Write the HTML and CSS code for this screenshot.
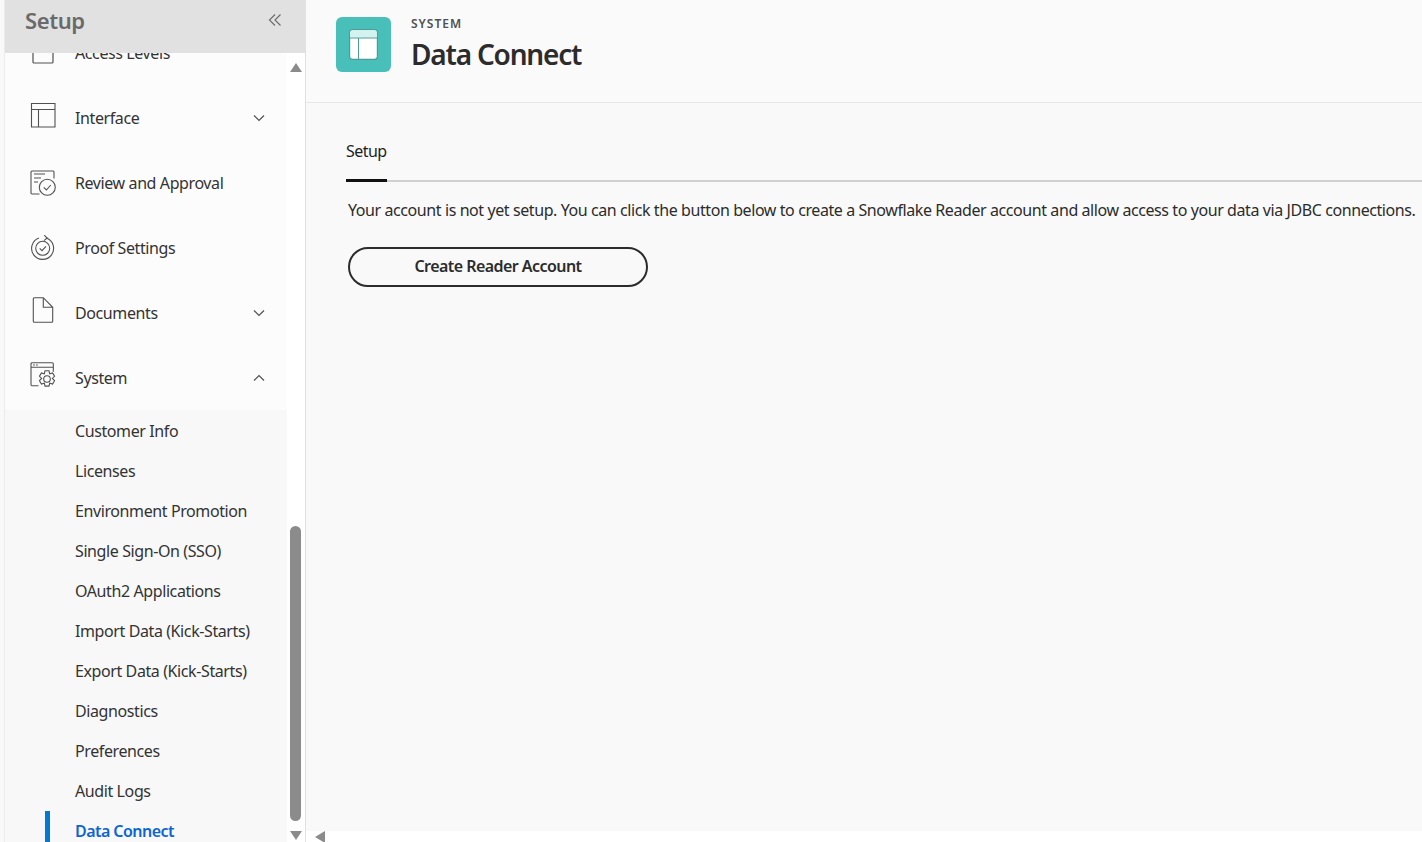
FILE: index.html
```html
<!DOCTYPE html>
<html lang="en">
<head>
<meta charset="utf-8">
<title>Data Connect</title>
<link rel="stylesheet" href="styles.css">
</head>
<body>
<div class="app">
  <aside class="sidebar">
    <div class="side-head">
      <span class="side-title">Setup</span>
      <svg class="collapse" width="14" height="14" viewBox="0 0 14 14"><path d="M7 1.500 1.500 7 7 12.500M12.500 1.500 7 7l5.500 5.500" fill="none" stroke="#6e6e6e" stroke-width="1.200"/></svg>
    </div>
    <div class="side-body">
      <nav class="nav">
        <div class="nav-list">
          <div class="row"><svg class="ico" width="26" height="26" viewBox="0 0 26 26"><rect x="3" y="3" width="20" height="20" rx="1" fill="none" stroke="#505050" stroke-width="1.200"/></svg><span>Access Levels</span></div>
          <div class="row"><svg class="ico ico-up" width="26" height="26" viewBox="0 0 26 26"><path d="M1.500 1.500h23.500v23.500H1.500zM1.500 7.500h23.500M8.500 7.500v17.500" fill="none" stroke="#505050" stroke-width="1.100"/></svg><span class="grow">Interface</span><svg class="chev" width="12" height="8" viewBox="0 0 12 8"><path d="M1 1.500 6 6.500l5-5" fill="none" stroke="#505050" stroke-width="1.200"/></svg></div>
          <div class="row"><svg class="ico" width="26" height="26" viewBox="0 0 26 26"><path d="M9.500 24H2a1 1 0 0 1-1-1V2a1 1 0 0 1 1-1h21a1 1 0 0 1 1 1v6.500M4 4h11M4 8h7M4 12h4" fill="none" stroke="#505050" stroke-width="1.100"/><circle cx="17.300" cy="17.300" r="8" fill="none" stroke="#505050" stroke-width="1.100"/><path d="m13.800 17.300 2.600 2.700 4.400-5" fill="none" stroke="#505050" stroke-width="1.100"/></svg><span>Review and Approval</span></div>
          <div class="row"><svg class="ico" width="26" height="26" viewBox="0 0 26 26"><path d="M16.500 3.100A11 11 0 1 1 9 3" fill="none" stroke="#505050" stroke-width="1.100"/><path d="m14.200 .2 2.900 2.800-3.100 2.600" fill="none" stroke="#505050" stroke-width="1.100"/><circle cx="12.700" cy="13.300" r="7" fill="none" stroke="#505050" stroke-width="1.100"/><path d="m9.700 13.300 2.300 2.300 4-4.300" fill="none" stroke="#505050" stroke-width="1.100"/></svg><span>Proof Settings</span></div>
          <div class="row"><svg class="ico ico-up" width="26" height="26" viewBox="0 0 26 26"><path d="M4.300 .7h9l9.400 9.600V24.300a1 1 0 0 1-1 1H4.300a1 1 0 0 1-1-1V1.700a1 1 0 0 1 1-1zM13.300 .7v9.600h9.400" fill="none" stroke="#505050" stroke-width="1.100"/></svg><span class="grow">Documents</span><svg class="chev" width="12" height="8" viewBox="0 0 12 8"><path d="M1 1.500 6 6.500l5-5" fill="none" stroke="#505050" stroke-width="1.200"/></svg></div>
          <div class="row"><svg class="ico ico-up" width="26" height="26" viewBox="0 0 26 26"><path d="M8.500 23.700H2a1 1 0 0 1-1-1V1.700a1 1 0 0 1 1-1h20.300a1 1 0 0 1 1 1v8M1 5.300h22.300M3 3h1.800M6 3h1.800" fill="none" stroke="#505050" stroke-width="1.100"/><path transform="translate(17 17) scale(1.300) translate(-17 -16.300)" d="m15.500 10 3 0 .6 2.300 2.200-.7 1.500 2.600-1.700 1.700 1.700 1.700-1.500 2.600-2.200-.7-.6 2.300h-3l-.6-2.300-2.200.7-1.500-2.600 1.700-1.700-1.700-1.700 1.500-2.600 2.200.7z" fill="#fcfcfd" stroke="#505050" stroke-width=".85"/><circle cx="17" cy="17" r="3.300" fill="none" stroke="#505050" stroke-width="1.100"/></svg><span class="grow">System</span><svg class="chev" width="12" height="8" viewBox="0 0 12 8"><path d="M1 6.500 6 1.500l5 5" fill="none" stroke="#505050" stroke-width="1.200"/></svg></div>
          <ul class="sub">
            <li>Customer Info</li>
            <li>Licenses</li>
            <li>Environment Promotion</li>
            <li>Single Sign-On (SSO)</li>
            <li>OAuth2 Applications</li>
            <li>Import Data (Kick-Starts)</li>
            <li>Export Data (Kick-Starts)</li>
            <li>Diagnostics</li>
            <li>Preferences</li>
            <li>Audit Logs</li>
            <li class="active">Data Connect</li>
          </ul>
        </div>
      </nav>
      <div class="vbar">
        <span class="arrow-up"></span>
        <span class="thumb-space"></span>
        <span class="thumb"></span>
        <span class="arrow-down"></span>
      </div>
    </div>
  </aside>
  <main class="main">
    <header class="page-head">
      <div class="app-icon">
        <svg width="29" height="31" viewBox="0 0 29 31"><rect x=".6" y=".6" width="27.800" height="29.800" rx="3" fill="#fff" stroke="#4d9c98" stroke-width="1.200"/><path d="M1.200 3.600a2.400 2.400 0 0 1 2.400-2.400h21.800a2.400 2.400 0 0 1 2.400 2.400V8.500H1.200z" fill="#d3f3f1"/><path d="M1 9h27M9.500 9v21" stroke="#4d9c98" stroke-width="1" fill="none"/></svg>
      </div>
      <div class="titles">
        <div class="eyebrow">SYSTEM</div>
        <h1>Data Connect</h1>
      </div>
    </header>
    <section class="content">
      <div class="tabs"><div class="tab">Setup</div></div>
      <p class="msg">Your account is not yet setup. You can click the button below to create a Snowflake Reader account and allow access to your data via JDBC connections.</p>
      <button class="btn" type="button">Create Reader Account</button>
    </section>
    <div class="hbar"><span class="arrow-left"></span></div>
  </main>
</div>
</body>
</html>
```
FILE: styles.css
```css
* { box-sizing: border-box; }
html, body { margin: 0; height: 100%; overflow: hidden; }
body { background: #f9f9f9; font-family: "Noto Sans", "Open Sans", sans-serif; color: #2c2c2c; }
.app { display: flex; height: 842px; padding-left: 4px; }
.sidebar { width: 302px; flex: none; display: flex; flex-direction: column; background: #fff; border-left: 1px solid #ececec; border-right: 1px solid #e1e1e1; }
.side-head { height: 53px; flex: none; background: #e1e1e1; display: flex; align-items: flex-start; justify-content: space-between; padding: 6px 23px 0 20px; }
.side-title { font-size: 22px; font-weight: 600; line-height: 28px; color: #6a6a6a; letter-spacing: -.4px; }
.collapse { margin-top: 7px; }
.side-body { flex: 1; display: flex; min-height: 0; }
.nav { width: 282px; flex: none; overflow: hidden; background: #fcfcfd; }
.nav-list { margin-top: -33px; }
.row { height: 65px; display: flex; align-items: center; padding: 0 22px 0 25px; font-size: 16px; letter-spacing: -.4px; color: #333; }
.ico { flex: none; margin-right: 19px; }
.ico-up { margin-bottom: 6px; }
.grow { flex: 1; }
.sub { list-style: none; margin: 0; padding: 1px 0 0; background: #f8f8f8; }
.sub li { height: 40px; line-height: 40px; padding-left: 70px; font-size: 16px; letter-spacing: -.4px; color: #333; position: relative; }
.sub .active { color: #0d66d0; font-weight: 600; letter-spacing: -.55px; }
.sub .active::before { content: ""; position: absolute; left: 40px; top: 0; width: 5px; height: 100%; background: #0078d4; }
.vbar { width: 18px; flex: none; display: flex; flex-direction: column; align-items: center; background: #fff; padding: 10px 1px 0 0; }
.arrow-up { width: 0; height: 0; border: 6.500px solid transparent; border-top: 0; border-bottom: 9px solid #8b8b8b; }
.thumb-space { height: 454px; flex: none; }
.thumb { width: 11px; height: 295px; flex: none; border-radius: 6px; background: #8b8b8b; }
.arrow-down { width: 0; height: 0; margin-top: 10px; border: 6.500px solid transparent; border-bottom: 0; border-top: 9px solid #8b8b8b; }
.main { flex: 1; min-width: 0; display: flex; flex-direction: column; }
.page-head { height: 103px; flex: none; display: flex; align-items: flex-start; padding: 17px 0 0 30px; border-bottom: 1px solid #e8e8e8; background: #fafafa; }
.app-icon { width: 55px; height: 55px; border-radius: 6px; background: #48bfb9; display: flex; align-items: center; justify-content: center; margin-right: 20px; }
.titles { margin-top: -1px; }
.eyebrow { font-size: 12px; font-weight: 600; letter-spacing: 1px; line-height: 16px; color: #505050; }
h1 { margin: 5px 0 0; font-size: 28px; font-weight: 600; line-height: 34px; letter-spacing: -1.2px; color: #2c2c2c; }
.content { flex: 1; padding: 0 0 0 40px; min-height: 0; }
.tabs { height: 79px; border-bottom: 2px solid #d0d0d0; padding-top: 38px; }
.tab { width: 41px; height: 41px; font-size: 16px; line-height: 21px; letter-spacing: -.55px; color: #1f1f1f; border-bottom: 3px solid #111; white-space: nowrap; }
.msg { margin: 18px 0 0 2px; font-size: 16px; line-height: 21px; letter-spacing: -.415px; white-space: nowrap; color: #2c2c2c; }
.btn { display: block; width: 300px; height: 40px; margin: 26px 0 0 2px; background: transparent; border: 2px solid #2c2c2c; border-radius: 20px; font-family: inherit; font-size: 16px; font-weight: 600; letter-spacing: -.55px; color: #2c2c2c; padding: 0 0 2px; }
.hbar { height: 11px; flex: none; background: #fff; padding-left: 9px; display: flex; align-items: center; }
.arrow-left { width: 0; height: 0; border: 6px solid transparent; border-left: 0; border-right: 10px solid #8b8b8b; }
```
